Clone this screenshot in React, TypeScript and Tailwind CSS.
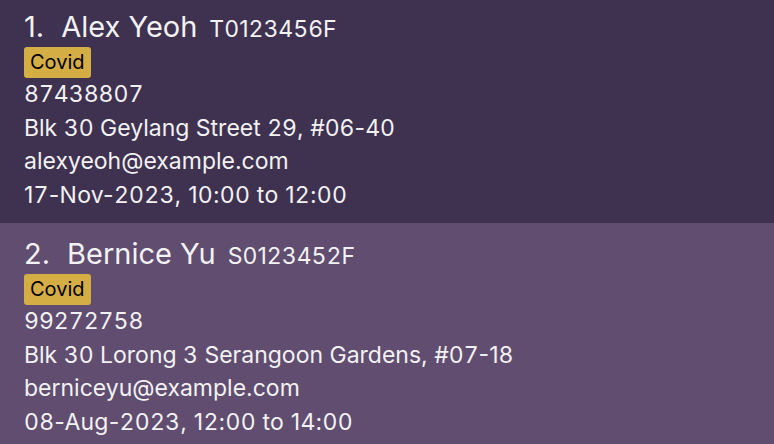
import React from "react";

type Person = {
  idx: number;
  name: string;
  nric: string;
  tag: string;
  phone: string;
  address: string;
  email: string;
  appt: string;
};

const people: Person[] = [
  {
    idx: 1,
    name: "Alex Yeoh",
    nric: "T0123456F",
    tag: "Covid",
    phone: "87438807",
    address: "Blk 30 Geylang Street 29, #06-40",
    email: "alexyeoh@example.com",
    appt: "17-Nov-2023, 10:00 to 12:00",
  },
  {
    idx: 2,
    name: "Bernice Yu",
    nric: "S0123452F",
    tag: "Covid",
    phone: "99272758",
    address: "Blk 30 Lorong 3 Serangoon Gardens, #07-18",
    email: "berniceyu@example.com",
    appt: "08-Aug-2023, 12:00 to 14:00",
  },
];

function Num({ text }: { text: string }) {
  const parts = text.split(/([02-9]+)/);
  return (
    <>
      {parts.map((part, i) =>
        /^[02-9]+$/.test(part) ? (
          <span key={i} className="tabular-nums">
            {part}
          </span>
        ) : (
          <span key={i}>{part}</span>
        )
      )}
    </>
  );
}

function Card({ p, first }: { p: Person; first: boolean }) {
  return (
    <div
      className={
        first
          ? "bg-[#3f3150] pl-[24px] pt-[6px] h-[223px]"
          : "bg-[#604d70] pl-[24px] pt-[10px] h-[221px]"
      }
    >
      <div className="flex items-baseline h-[41px] leading-[41px]">
        <span className="text-[29px] text-[#f2f2f2]">{p.idx}.</span>
        <span className="text-[29px] text-[#f2f2f2] ml-[17px]">{p.name}</span>
        <span className="text-[23px] text-[#f2f2f2] ml-[12px]">
          <Num text={p.nric} />
        </span>
      </div>
      <div className="flex">
        <span className="bg-[#d4ad45] text-black text-[20px] leading-[31px] h-[31px] px-[6px] rounded-[3px]">
          {p.tag}
        </span>
      </div>
      <div className="text-[23px] leading-[33.5px] text-[#f2f2f2]">
        <div>
          <Num text={p.phone} />
        </div>
        <div>
          <Num text={p.address} />
        </div>
        <div>{p.email}</div>
        <div className="tracking-[0.25px]">
          <Num text={p.appt} />
        </div>
      </div>
    </div>
  );
}

export default function App() {
  return (
    <div
      className="w-[774px] h-[444px] overflow-hidden bg-[#604d70]"
      style={{ fontFamily: "Inter, 'Noto Sans', sans-serif" }}
    >
      {people.map((p, i) => (
        <Card key={p.idx} p={p} first={i === 0} />
      ))}
    </div>
  );
}
